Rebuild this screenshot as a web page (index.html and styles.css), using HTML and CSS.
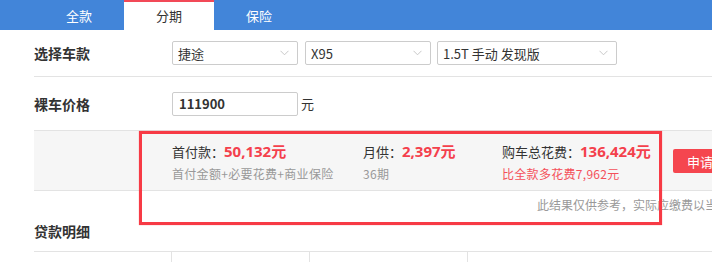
FILE: index.html
```html
<!DOCTYPE html>
<html lang="zh-CN">
<head>
<meta charset="utf-8">
<link rel="stylesheet" href="styles.css">
</head>
<body>
<div class="page">
  <nav class="tabs">
    <a class="tab">全款</a>
    <a class="tab active">分期</a>
    <a class="tab">保险</a>
  </nav>
  <div class="content">
    <div class="row">
      <div class="label">选择车款</div>
      <div class="fields">
        <div class="select s1"><span>捷途</span><svg class="chev" width="9" height="6" viewBox="0 0 9 6"><path d="M0.5 0.8l4 4 4-4" fill="none" stroke="#c8c8c8" stroke-width="1"/></svg></div>
        <div class="select s2"><span>X95</span><svg class="chev" width="9" height="6" viewBox="0 0 9 6"><path d="M0.5 0.8l4 4 4-4" fill="none" stroke="#c8c8c8" stroke-width="1"/></svg></div>
        <div class="select s3"><span>1.5T 手动 发现版</span><svg class="chev" width="9" height="6" viewBox="0 0 9 6"><path d="M0.5 0.8l4 4 4-4" fill="none" stroke="#c8c8c8" stroke-width="1"/></svg></div>
      </div>
    </div>
    <div class="row row2">
      <div class="label">裸车价格</div>
      <div class="fields">
        <div class="input">111900</div>
        <span class="unit">元</span>
      </div>
    </div>
    <div class="summary">
      <div class="col c1">
        <div class="line1">首付款：<b>50,132元</b></div>
        <div class="line2">首付金额+必要花费+商业保险</div>
      </div>
      <div class="col c2">
        <div class="line1">月供：<b>2,397元</b></div>
        <div class="line2">36期</div>
      </div>
      <div class="col c3">
        <div class="line1">购车总花费：<b>136,424元</b></div>
        <div class="line2 red">比全款多花费7,962元</div>
      </div>
      <div class="btn">申请贷款</div>
    </div>
    <div class="note">此结果仅供参考，实际应缴费以当地为准</div>
    <h3 class="section">贷款明细</h3>
    <div class="table">
      <div class="cell w1"></div>
      <div class="cell w2"></div>
      <div class="cell w3"></div>
      <div class="cell w4"></div>
    </div>
  </div>
  <div class="highlight"></div>
</div>
</body>
</html>
```
FILE: styles.css
```css
* { box-sizing: border-box; }
html, body { margin: 0; padding: 0; overflow: hidden; }
body {
  font-family: "Noto Sans CJK SC", "Noto Sans", sans-serif;
  color: #333;
  background: #fff;
  width: 712px;
  height: 262px;
}
.page { position: relative; width: 860px; }
.tabs {
  display: flex;
  height: 30px;
  background: #4285d9;
  padding-left: 34px;
}
.tab {
  width: 90px;
  display: flex;
  align-items: center;
  justify-content: center;
  color: #fff;
  font-size: 13px;
  line-height: 1;
}
.tab.active {
  background: #fff;
  color: #333;
  border-top: 2px solid #f24957;
  padding-bottom: 2px;
}
.content { padding-left: 34px; }
.row {
  display: flex;
  align-items: center;
  height: 47px;
  border-bottom: 1px solid #e3e3e3;
}
.row2 { border-bottom: none; height: 53px; }
.label {
  width: 138px;
  font-size: 14px;
  font-weight: bold;
  color: #333;
}
.fields { display: flex; align-items: center; gap: 7px; }
.select, .input {
  height: 24px;
  border: 1px solid #ccc;
  border-radius: 2px;
  display: flex;
  align-items: center;
  justify-content: space-between;
  padding: 0 8px 0 5px;
  font-size: 13px;
  color: #333;
}
.s1 { width: 126px; }
.s2 { width: 126px; }
.s3 { width: 180px; margin-left: -1px; }
.chev { flex: none; }
.input {
  width: 126px;
  font-weight: bold;
  font-size: 13px;
  padding-left: 6px;
}
.unit { font-size: 13px; margin-left: -4px; }
.summary {
  display: flex;
  align-items: flex-start;
  height: 61px;
  background: #f6f6f6;
  border-top: 1px solid #e3e3e3;
  border-bottom: 1px solid #e3e3e3;
  padding: 11px 0 0 138px;
}
.col { display: flex; flex-direction: column; gap: 5px; }
.c1 { width: 191px; }
.c2 { width: 139px; }
.c3 { width: 171px; }
.line1 { font-size: 13px; color: #333; height: 18px; line-height: 18px; white-space: nowrap; }
.line1 b { color: #f4404c; font-size: 15px; font-family: "Open Sans", "Noto Sans CJK SC", sans-serif; }
.line2 { font-size: 12px; letter-spacing: 0.3px; color: #999; white-space: nowrap; }
.line2.red { color: #f4505a; }
.btn {
  margin-top: 7px;
  width: 80px;
  height: 24px;
  background: #f5464f;
  color: #fff;
  font-size: 13px;
  display: flex;
  align-items: center;
  justify-content: center;
  border-radius: 2px;
}
.note {
  height: 26px;
  display: flex;
  align-items: center;
  padding-left: 503px;
  font-size: 12px;
  color: #999;
  white-space: nowrap;
}
.section {
  margin: 0 0 6px;
  height: 28px;
  font-size: 14px;
  font-weight: bold;
  color: #333;
  display: flex;
  align-items: center;
}
.table {
  display: flex;
  border-top: 1px solid #e3e3e3;
  height: 20px;
}
.cell { border-right: 1px solid #e3e3e3; }
.w1 { width: 138px; }
.w2 { width: 138px; }
.w3 { width: 158px; }
.w4 { width: 300px; border-right: none; }
.highlight {
  position: absolute;
  left: 139px;
  top: 131px;
  width: 523px;
  height: 94px;
  border: 3px solid #f73a45;
  box-shadow: 0 0 1px rgba(247,58,69,0.6);
}
```
